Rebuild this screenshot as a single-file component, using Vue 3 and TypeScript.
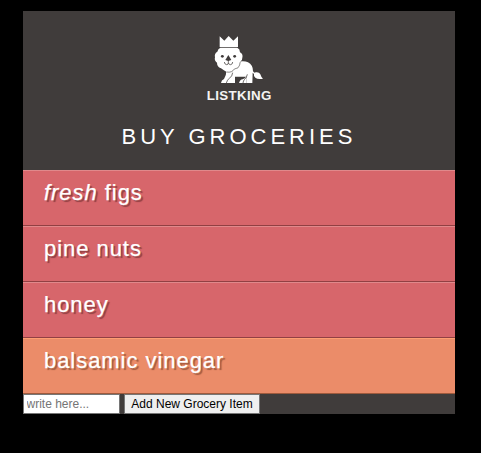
<script setup lang="ts">
import { ref } from 'vue'

interface GroceryItem {
  id: number
  text: string
  emphasis?: string
  tone: 'hot' | 'cool'
}

const items = ref<GroceryItem[]>([
  { id: 1, emphasis: 'fresh', text: ' figs', tone: 'hot' },
  { id: 2, text: 'pine nuts', tone: 'hot' },
  { id: 3, text: 'honey', tone: 'hot' },
  { id: 4, text: 'balsamic vinegar', tone: 'cool' },
])
const draft = ref('')

function addItem(): void {
  const text = draft.value.trim()
  if (!text) return
  items.value.push({ id: Date.now(), text, tone: 'cool' })
  draft.value = ''
}
</script>

<template>
  <main class="page">
    <header class="header">
      <svg class="logo" viewBox="0 0 270 255" role="img" aria-label="ListKing">
        <g fill="#fff">
          <path d="M77 34 L91 47 L104 33 L118 47 L132 34 V66 H77 Z" />
          <path d="M79 68 H130 Q138 72 138 82 Q148 88 145 98 Q145 105 140 109 Q153 107 162 112 Q177 119 177 139 Q181 145 185 142 Q195 140 199 148 Q201 156 207 161 Q191 164 184 158 Q178 154 180 147 L176 143 L175 174 H157 V155 H123 V174 H81 Q82 165 90 162 Q97 150 97 140 Q88 136 81 130 Q69 126 69 113 Q60 107 63 97 Q60 86 70 80 Q72 71 79 68 Z" />
          <path d="M157 153 Q154 162 146 163 Q138 164 135 174 H157 Z" />
        </g>
        <g fill="#403c3b">
          <circle cx="85" cy="94" r="4.3" />
          <circle cx="122" cy="94" r="4.3" />
          <path d="M94 105 L103 90 L112 105 L103 108 Z" />
        </g>
        <g fill="none" stroke="#403c3b">
          <path d="M103 106 V114 M91 111 Q92 119 98 119 Q103 119 103 114 Q105 119 110 119 Q116 118 116 111" stroke-width="2.2" />
          <path d="M98 141 Q114 144 121 132 Q135 131 137 120 Q137 112 141 109" stroke-width="1.8" />
          <path d="M116 143 Q115 154 106 160 Q100 164 97 174 M160 148 Q158 159 151 164 Q148 167 147 174" stroke-width="2.2" />
        </g>
        <text x="38" y="225" textLength="194" class="logo-text">LISTKING</text>
      </svg>
      <h2 class="title">Buy groceries</h2>
    </header>
    <ul class="list">
      <li v-for="item in items" :key="item.id" class="item" :class="item.tone"><em v-if="item.emphasis">{{ item.emphasis }}</em>{{ item.text }}</li>
    </ul>
    <form class="form" @submit.prevent="addItem">
      <input v-model="draft" class="field" type="text" placeholder="write here..." />
      <button class="add" type="submit">Add New Grocery Item</button>
    </form>
  </main>
</template>

<style>
body {
  background: #000;
}
</style>

<style scoped>
.page {
  width: 432px;
  margin: 11px 0 0 23px;
  background: #403c3b;
  color: #fff;
  font-family: "Liberation Sans", Arial, sans-serif;
}
.header {
  display: flex;
  flex-direction: column;
  align-items: center;
  box-sizing: border-box;
  height: 159px;
  padding-top: 14px;
}
.logo {
  display: block;
  width: 90px;
  height: 85px;
  flex: none;
}
.logo-text {
  font: bold 40px "Liberation Sans", Arial, sans-serif;
  fill: #f4f3f3;
}
.title {
  margin: 14px 0 0;
  font-size: 22px;
  line-height: 26px;
  font-weight: normal;
  letter-spacing: 4px;
  text-transform: uppercase;
  white-space: nowrap;
}
.list {
  margin: 0;
  padding: 0;
  list-style: none;
}
.item {
  box-sizing: border-box;
  height: 56px;
  padding: 9px 21px 0;
  border-top: 1px solid #e0898b;
  border-bottom: 1px solid #914043;
  background: #d7666b;
  font-size: 22px;
  line-height: 26px;
  letter-spacing: 0.95px;
  text-shadow: 2px 2px 1px #914043;
  -webkit-text-stroke: 0.25px #fff;
  white-space: pre;
}
.item.cool {
  border-top-color: #ff9e72;
  border-bottom-color: #9e5a3d;
  background: #eb8c69;
  text-shadow: 2px 2px 1px #a35b3f;
}
.form {
  display: flex;
  gap: 4px;
  height: 20px;
}
.field,
.add {
  box-sizing: border-box;
  height: 20px;
  margin: 0;
  border: 1px solid #767676;
  border-radius: 0;
  font: 12px "Liberation Sans", Arial, sans-serif;
}
.field {
  width: 97px;
  padding: 0 2.5px;
  background: #fff;
}
.field::placeholder {
  color: #757575;
}
.add {
  width: 136px;
  padding: 0;
  background: #efefef;
  color: #000;
  white-space: nowrap;
}
</style>
